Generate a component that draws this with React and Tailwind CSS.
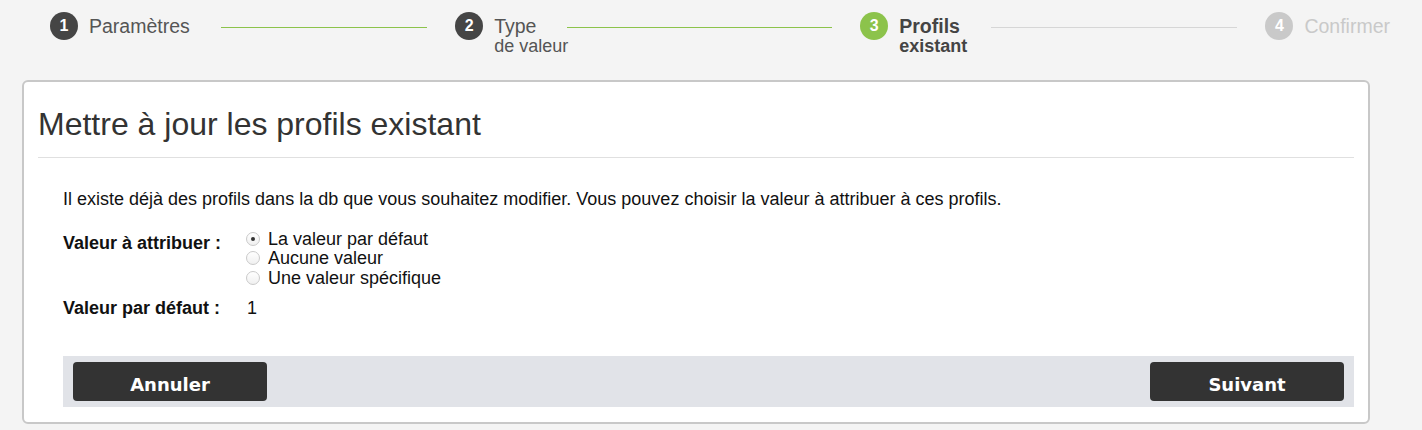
/* Wizard step 3: update existing profiles. */

const STEPS = [
  { n: 1, title: "Paramètres", state: "done" },
  { n: 2, title: "Type", sub: "de valeur", state: "done" },
  { n: 3, title: "Profils", sub: "existant", state: "current" },
  { n: 4, title: "Confirmer", state: "todo" },
];

const OPTIONS = [
  { label: "La valeur par défaut", checked: true },
  { label: "Aucune valeur" },
  { label: "Une valeur spécifique" },
];

const Step = ({ step, last, lineDone }) => {
  const circle =
    step.state === "current" ? "bg-[#8cc34b]" : step.state === "todo" ? "bg-[#c9c9c9]" : "bg-[#454545]";
  const text =
    step.state === "current" ? "text-[#444] font-bold" : step.state === "todo" ? "text-[#c9c9c9]" : "text-[#555]";
  return (
    <div className={last ? "flex items-start flex-none" : "flex items-start flex-1 basis-0"}>
      <span className={"size-[28px] rounded-full flex items-center justify-center text-white text-[16px] font-bold flex-none " + circle}>
        {step.n}
      </span>
      <div className={"ml-[11px] leading-[20px] " + text}>
        <div className="text-[19.5px] pt-[4px] whitespace-nowrap">{step.title}</div>
        {/* the sub line hangs under the title; the connector starts after the title only */}
        {step.sub && <div className="text-[18px] w-0 whitespace-nowrap">{step.sub}</div>}
      </div>
      {!last && (
        <div className={"flex-1 h-px mt-[15px] ml-[31px] mr-[28px] " + (lineDone ? "bg-[#8cc34b]" : "bg-[#d6d6d6]")} />
      )}
    </div>
  );
};

const Radio = ({ checked }) => (
  <span className="size-[14px] rounded-full border border-[#cacaca] bg-gradient-to-b from-white to-[#f0f0f0] flex items-center justify-center flex-none">
    {checked && <span className="size-[4px] rounded-full bg-[#333]" />}
  </span>
);

export default function App() {
  return (
    <div className="w-full h-[430px] bg-[#f4f4f4] overflow-hidden" style={{ fontFamily: '"Liberation Sans", Arial, Helvetica, sans-serif' }}>
      {/* Stepper */}
      <div className="h-[80px] pt-[12px] pl-[50px] pr-[32px] flex items-start">
        {STEPS.map((s, i) => (
          <Step key={s.n} step={s} last={i === STEPS.length - 1} lineDone={i < 2} />
        ))}
      </div>

      {/* Panel */}
      <div className="ml-[22px] w-[1348px] h-[344px] bg-white border-2 border-[#c8c8c8] rounded-[6px] px-[14px] pt-[24px] flex flex-col">
        <h1 className="text-[32px] leading-[36px] text-[#333] pb-[15px] border-b border-[#e0e0e0]">
          Mettre à jour les profils existant
        </h1>

        <div className="pl-[25px] text-[18px] leading-[20px] text-[#111]">
          <p className="mt-[31px]">
            Il existe déjà des profils dans la db que vous souhaitez modifier. Vous pouvez choisir la valeur à attribuer à ces profils.
          </p>

          <div className="mt-[21px] grid grid-cols-[183px_1fr] gap-y-[10px]">
            <div className="font-bold pt-[3px]">Valeur à attribuer :</div>
            <div className="flex flex-col -mt-px">
              {OPTIONS.map((o) => (
                <label key={o.label} className="flex items-center gap-[8px] h-[19.5px]">
                  <Radio checked={o.checked} />
                  <span>{o.label}</span>
                </label>
              ))}
            </div>
            <div className="font-bold">Valeur par défaut :</div>
            <div className="pl-px">1</div>
          </div>
        </div>

        {/* Actions */}
        <div className="mt-auto mb-[15px] ml-[25px] bg-[#e1e3e8] h-[51px] px-[10px] flex items-center justify-between">
          {["Annuler", "Suivant"].map((b) => (
            <button key={b}
              className="w-[194px] h-[39px] bg-[#333] rounded-[4px] text-white font-bold text-[18px] pt-[6px]"
              style={{ fontFamily: '"DejaVu Sans", Verdana, sans-serif' }}>
              {b}
            </button>
          ))}
        </div>
      </div>
    </div>
  );
}
